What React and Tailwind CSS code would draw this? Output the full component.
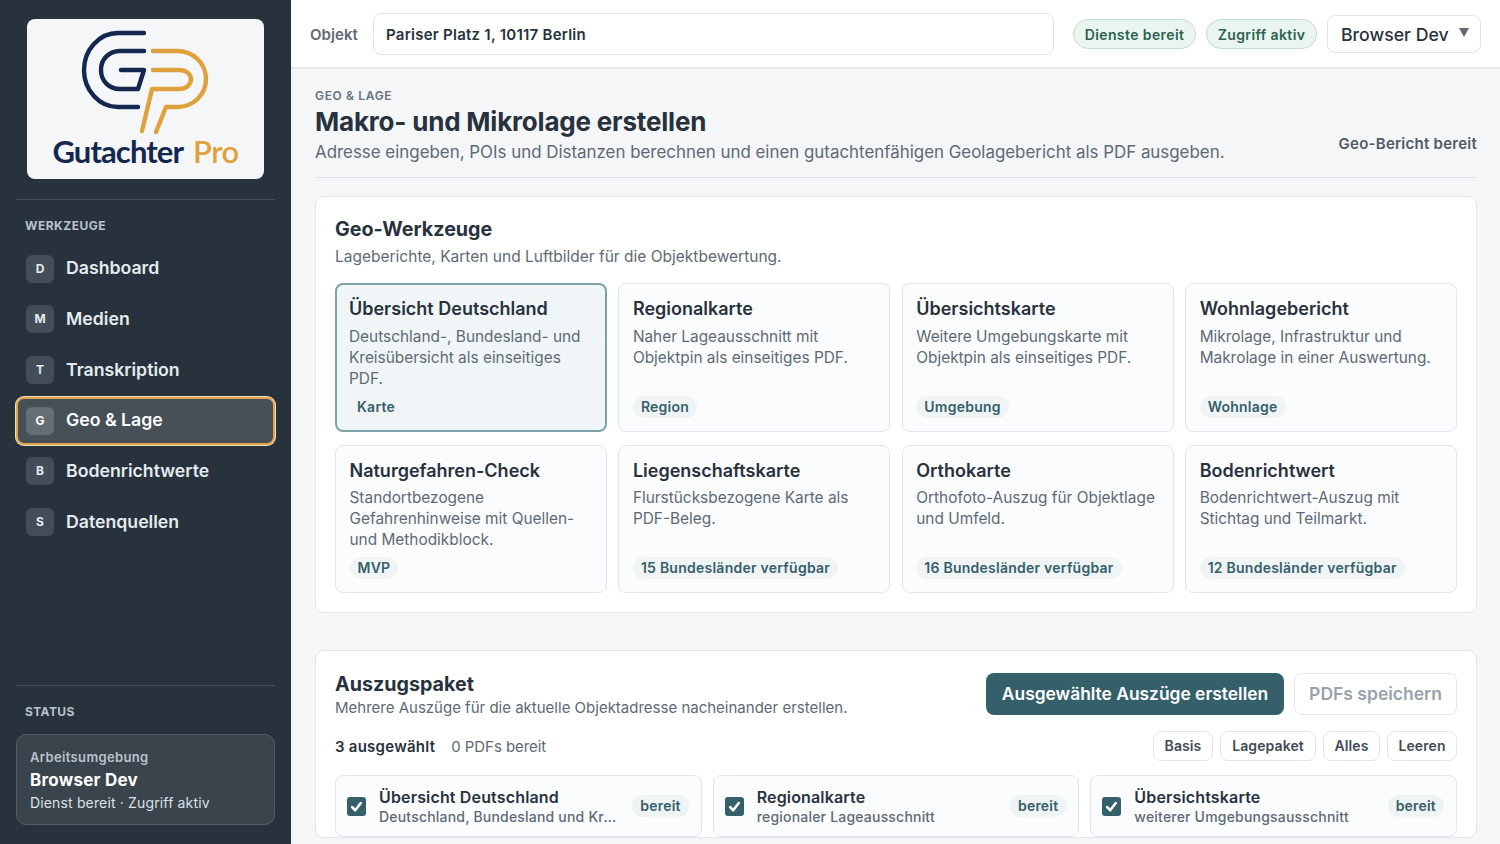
import React from "react";

const nav = [
  ["D", "Dashboard"],
  ["M", "Medien"],
  ["T", "Transkription"],
  ["G", "Geo & Lage", true],
  ["B", "Bodenrichtwerte"],
  ["S", "Datenquellen"],
];

const tools = [
  ["Übersicht Deutschland", "Deutschland-, Bundesland- und Kreisübersicht als einseitiges PDF.", "Karte", true],
  ["Regionalkarte", "Naher Lageausschnitt mit Objektpin als einseitiges PDF.", "Region"],
  ["Übersichtskarte", "Weitere Umgebungskarte mit Objektpin als einseitiges PDF.", "Umgebung"],
  ["Wohnlagebericht", "Mikrolage, Infrastruktur und Makrolage in einer Auswertung.", "Wohnlage"],
  ["Naturgefahren-Check", "Standortbezogene Gefahrenhinweise mit Quellen- und Methodikblock.", "MVP"],
  ["Liegenschaftskarte", "Flurstücksbezogene Karte als PDF-Beleg.", "15 Bundesländer verfügbar"],
  ["Orthokarte", "Orthofoto-Auszug für Objektlage und Umfeld.", "16 Bundesländer verfügbar"],
  ["Bodenrichtwert", "Bodenrichtwert-Auszug mit Stichtag und Teilmarkt.", "12 Bundesländer verfügbar"],
];

const extracts = [
  ["Übersicht Deutschland", "Deutschland, Bundesland und Kreisübersicht"],
  ["Regionalkarte", "regionaler Lageausschnitt"],
  ["Übersichtskarte", "weiterer Umgebungsausschnitt"],
];

function Logo() {
  return (
    <svg width="134" height="104" viewBox="78 30 134 104" fill="none" strokeWidth="4.4" strokeLinecap="round" strokeLinejoin="round">
      <path d="M143 33H117C98 33 83 50 83 70C83 90 98 107 117 107H137" stroke="#14284f" />
      <path d="M143 51H119C108 51 100 59 100 70C100 81 108 89 119 89H137L143 70H120" stroke="#14284f" />
      <path d="M152 51H176C192 51 205 63 205 79C205 95 192 107 176 107H165L155 132" stroke="#dfa13c" />
      <path d="M152 70H178C185 70 190 74 190 79C190 85 185 89 178 89H151L141 131" stroke="#dfa13c" />
    </svg>
  );
}

function Check() {
  return (
    <span className="flex h-[19px] w-[19px] shrink-0 items-center justify-center rounded-[3px] bg-[#35606a]">
      <svg width="15" height="15" viewBox="0 0 14 14" fill="none">
        <path d="M3 7.5L5.8 10.5L11 3.8" stroke="white" strokeWidth="2.4" strokeLinecap="round" strokeLinejoin="round" />
      </svg>
    </span>
  );
}

export default function App() {
  return (
    <div className="flex h-[844px] w-[1500px] overflow-hidden bg-[#f4f6f8] font-['Inter',sans-serif] text-[#27323d]">
      <aside className="flex w-[291px] shrink-0 flex-col bg-[#27323d] px-4">
        <div className="mx-[11px] mt-[19px] flex h-[160px] flex-col items-center rounded-lg bg-[#f4f6f8] pt-[11px]">
          <Logo />
          <div className="flex gap-[10px] whitespace-nowrap font-['Lato',sans-serif] text-[31px] font-bold leading-[35px]">
            <span className="tracking-[-0.9px] text-[#14284f]">Gutachter</span>
            <span className="font-semibold tracking-[-0.6px] text-[#dfa13c]">Pro</span>
          </div>
        </div>
        <div className="mt-5 h-px bg-[#465059]" />
        <div className="ml-[9px] mt-[18px] text-xs font-bold leading-[15px] tracking-[0.5px] text-[#b9c3ca]">WERKZEUGE</div>
        <nav className="mt-[11.5px] flex flex-col gap-[2.7px]">
          {nav.map(([k, label, active]) => (
            <div
              key={k}
              className={
                active
                  ? "flex h-[48px] items-center gap-3 rounded-lg border-2 border-[#dfa54e] bg-[#474f57] pl-2 text-white shadow-[0_0_0_1px_#f0e0c0]"
                  : "flex h-[48px] items-center gap-3 rounded-lg border-2 border-transparent pl-2 text-[#e5eaee]"
              }
            >
              <span className={active ? "flex h-7 w-7 items-center justify-center rounded-md bg-[#666d74] text-xs font-bold" : "flex h-7 w-7 items-center justify-center rounded-md bg-[#434d57] text-xs font-bold"}>{k}</span>
              <span className="text-[17.7px] font-semibold">{label}</span>
            </div>
          ))}
        </nav>
        <div className="mt-auto h-px bg-[#465059]" />
        <div className="ml-[9px] mt-[18px] text-xs font-bold leading-[15px] tracking-[0.4px] text-[#b9c3ca]">STATUS</div>
        <div className="mb-[19px] mt-[15px] h-[91px] rounded-[10px] border border-[#535d66] bg-[#3a444c] px-[13px] pt-[13px]">
          <div className="text-[13px] font-semibold leading-[18px] tracking-[0.35px] text-[#b9c3ca]">Arbeitsumgebung</div>
          <div className="mt-[2px] text-[17px] font-bold leading-[24px] tracking-[0.25px] text-white">Browser Dev</div>
          <div className="mt-[1px] text-sm leading-[20px] tracking-[0.15px] text-[#dce2e6]">Dienst bereit · Zugriff aktiv</div>
        </div>
      </aside>

      <div className="flex min-w-0 flex-1 flex-col">
        <header className="flex h-[69px] shrink-0 items-center border-b-2 border-[#e4e8eb] bg-white pl-[19px] pr-[19px]">
          <span className="w-[63px] pt-[3px] text-[15px] font-semibold tracking-[0.05px] text-[#5d6a74]">Objekt</span>
          <div className="flex h-[42px] w-[681px] items-center rounded-lg border border-[#dfe4e8] bg-white pl-[12px] pt-[4px] text-[15px] font-semibold tracking-[0.25px] text-[#27323d]">
            Pariser Platz 1, 10117 Berlin
          </div>
          <span className="ml-[19px] flex h-[30px] w-[123px] items-center justify-center rounded-full border border-[#c3dccf] bg-[#eaf5ef] pt-[2px] text-sm font-semibold tracking-[0.4px] text-[#2c6350]">Dienste bereit</span>
          <span className="ml-[10px] flex h-[30px] w-[111px] items-center justify-center rounded-full border border-[#c3dccf] bg-[#eaf5ef] pt-[2px] text-sm font-semibold tracking-[0.4px] text-[#2c6350]">Zugriff aktiv</span>
          <div className="ml-[10px] flex h-[38px] w-[154px] items-center rounded-lg border border-[#dfe4e8] bg-white pl-[13px] pt-[4px] text-[17.7px] font-medium text-[#27323d]">
            Browser Dev
            <svg className="ml-[10px] mb-[7px]" width="10" height="9" viewBox="0 0 10 9"><path d="M0 0H10L5 9Z" fill="#5d6a74" /></svg>
          </div>
        </header>

        <main className="flex-1 overflow-hidden pl-6 pr-[23px]">
          <div className="flex h-[109px] items-end justify-between border-b border-[#dfe3e7] pb-[13px]">
            <div>
              <div className="text-xs font-semibold leading-[15px] tracking-[0.65px] text-[#66727c]">GEO & LAGE</div>
              <h1 className="mt-[2px] text-[26px] font-bold leading-[34px] tracking-[-0.2px] text-[#27323d]">Makro- und Mikrolage erstellen</h1>
              <p className="mt-[1px] text-[16.9px] leading-[24px] text-[#5d6a74]">Adresse eingeben, POIs und Distanzen berechnen und einen gutachtenfähigen Geolagebericht als PDF ausgeben.</p>
            </div>
            <div className="mb-[10px] text-[15px] font-semibold leading-[20px] tracking-[0.25px] text-[#4f5b65]">Geo-Bericht bereit</div>
          </div>

          <section className="mt-[18px] rounded-lg border border-[#e2e6ea] bg-white px-[19px] pb-[19px] pt-[18px]">
            <h2 className="text-[19.7px] font-bold leading-[28px]">Geo-Werkzeuge</h2>
            <p className="mt-[2px] text-[15.5px] leading-[24px] text-[#5d6a74]">Lageberichte, Karten und Luftbilder für die Objektbewertung.</p>
            <div className="mt-[14px] grid grid-cols-4 gap-x-[11.5px] gap-y-[13px]">
              {tools.map(([title, text, tag, active]) => (
                <div
                  key={title}
                  className={
                    active
                      ? "flex h-[148.5px] flex-col items-start rounded-lg border-2 border-[#7fa2a8] bg-[#f0f6f7] px-[12px] pb-[12px] pt-[11px]"
                      : "flex h-[148.5px] flex-col items-start rounded-lg border border-[#e2e6ea] bg-[#fbfcfd] px-[13.5px] pb-[13px] pt-[12px]"
                  }
                >
                  <div className="text-lg font-semibold leading-[26px]">{title}</div>
                  <p className="mt-[3.5px] text-[15.4px] leading-[21px] text-[#5d6a74]">{text}</p>
                  <span className="mt-auto rounded-full bg-[#f0f4f5] px-2 py-[2px] text-sm font-semibold leading-[18px] tracking-[0.25px] text-[#35606a]">{tag}</span>
                </div>
              ))}
            </div>
          </section>

          <section className="mt-[37px] rounded-lg border border-[#e2e6ea] bg-white px-[19px] pt-[21px]">
            <div className="flex items-start justify-between">
              <div>
                <h2 className="text-[19.7px] font-bold leading-[24px]">Auszugspaket</h2>
                <p className="mt-[1px] text-[15px] leading-[22px] text-[#5d6a74]">Mehrere Auszüge für die aktuelle Objektadresse nacheinander erstellen.</p>
              </div>
              <div className="mt-px flex gap-[10px]">
                <button className="h-[42px] w-[298px] rounded-lg bg-[#35606a] text-[17.4px] font-semibold text-white">Ausgewählte Auszüge erstellen</button>
                <button className="h-[42px] w-[163px] rounded-lg border border-[#e2e6ea] bg-white text-[17.5px] font-semibold text-[#98a2aa]">PDFs speichern</button>
              </div>
            </div>
            <div className="mt-[12px] flex items-center">
              <span className="pt-[2px] text-[15px] font-semibold tracking-[0.25px]">3 ausgewählt</span>
              <span className="ml-4 pt-[2px] text-[15px] tracking-[-0.05px] text-[#5d6a74]">0 PDFs bereit</span>
              <div className="ml-auto flex gap-[7px]">
                {[["Basis", "w-[60px]"], ["Lagepaket", "w-[96px]"], ["Alles", "w-[57px]"], ["Leeren", "w-[70px]"]].map(([t, w]) => (
                  <button key={t} className={"h-[30px] rounded-lg border border-[#e2e6ea] bg-white text-sm font-semibold tracking-[0.1px] text-[#3f4b55] " + w}>{t}</button>
                ))}
              </div>
            </div>
            <div className="mt-[14px] grid grid-cols-3 gap-x-[11px]">
              {extracts.map(([title, sub]) => (
                <div key={title} className="flex h-[62px] items-center rounded-lg border border-[#e2e6ea] bg-[#fbfcfd] pl-[11px] pr-[12px]">
                  <Check />
                  <div className="ml-[13px] min-w-0 flex-1">
                    <div className="truncate text-base font-semibold leading-[22px] tracking-[0.15px]">{title}</div>
                    <div className="truncate text-sm font-medium leading-[18px] tracking-[0.2px] text-[#5d6a74]">{sub}</div>
                  </div>
                  <span className="ml-[12px] shrink-0 rounded-full bg-[#eef3f4] px-2 py-[3px] text-sm font-semibold leading-[16px] tracking-[0.2px] text-[#35606a]">bereit</span>
                </div>
              ))}
            </div>
          </section>
        </main>
      </div>
    </div>
  );
}
